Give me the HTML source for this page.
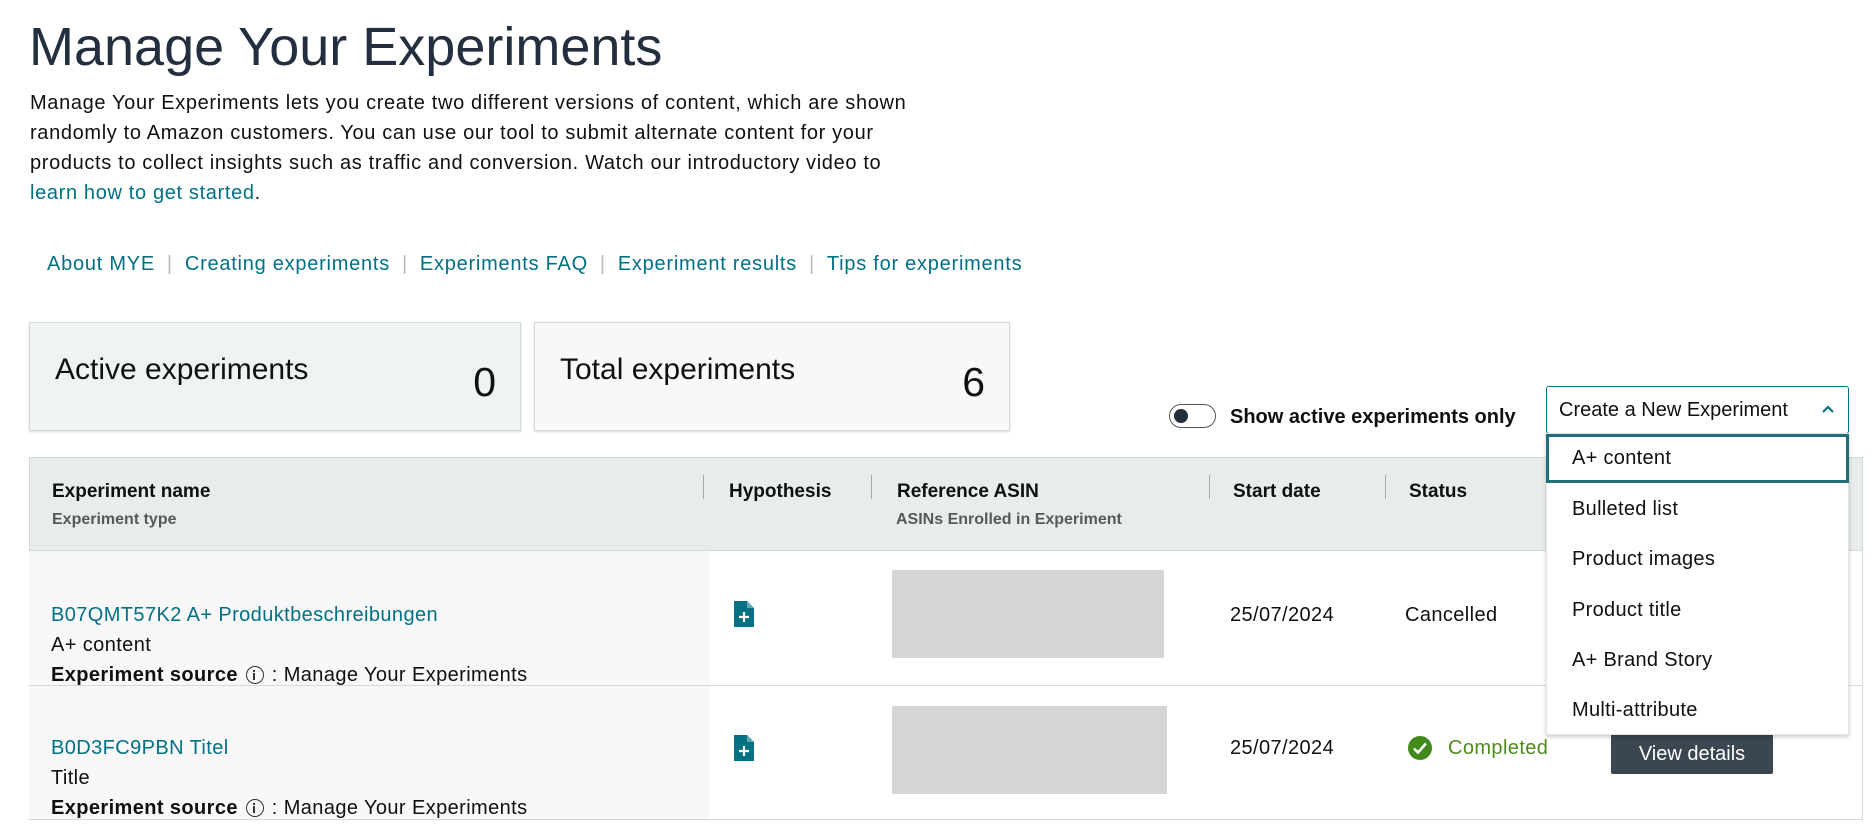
<!DOCTYPE html>
<html><head><meta charset="utf-8"><style>
*{margin:0;padding:0;box-sizing:border-box}
body{width:1876px;height:829px;overflow:hidden;background:#fff;font-family:"Liberation Sans",sans-serif;color:#0f1111;position:relative}
.a{position:absolute;white-space:nowrap}
.l{color:#007185}
h1{position:absolute;left:29px;top:16px;font-size:54px;font-weight:400;color:#232f3e;letter-spacing:0px}
.p{left:30px;font-size:20px;line-height:30px;top:88px;letter-spacing:0.65px}
.links{left:47px;top:253px;font-size:20px;letter-spacing:0.75px}
.links span.s{color:#bbb;margin:0 12px}
.card{position:absolute;top:322px;height:109px;border:1px solid #d5d9d9;box-shadow:0 1px 2px rgba(0,0,0,.15)}
.card .t{position:absolute;left:25px;top:30px;font-size:30px}
.card .n{position:absolute;right:24px;top:36px;font-size:41px}
.th{position:absolute;left:29px;top:457px;width:1834px;height:94px;background:#e9ecec;border:1px solid #d5d9d9}
.hd{font-weight:700;font-size:19px;top:481px}
.sub{font-size:16px;color:#565959;top:511px;font-weight:700}
.div{position:absolute;top:475px;width:1px;height:24px;background:#aaa}
.row{position:absolute;left:29px;width:1834px;border-bottom:1px solid #d5d9d9;border-right:1px solid #d5d9d9}
.c1{position:absolute;left:0;top:0;width:681px;height:100%;background:#f8f8f8}
.f{font-size:20px;letter-spacing:0.4px;line-height:24px}
.grey{position:absolute;background:#d5d5d7}
.menu{position:absolute;left:1546px;top:433px;width:303px;height:302px;background:#fff;box-shadow:0 2px 4px rgba(0,0,0,.2);border:1px solid #e3e3e3}
.mi{position:absolute;left:25px;font-size:20px;letter-spacing:0.3px}
.i{display:inline-block;width:18px;height:18px;border:1.5px solid #333;border-radius:50%;vertical-align:-3px;position:relative;margin:0 2px}
.i:after{content:"";position:absolute;left:6.5px;top:6px;width:2px;height:7px;background:#333}
.i:before{content:"";position:absolute;left:6.5px;top:2.5px;width:2px;height:2px;background:#333}
</style></head><body>
<h1>Manage Your Experiments</h1>
<div class="a p">Manage Your Experiments lets you create two different versions of content, which are shown<br>randomly to Amazon customers. You can use our tool to submit alternate content for your<br>products to collect insights such as traffic and conversion. Watch our introductory video to<br><span class="l">learn how to get started</span>.</div>
<div class="a links"><span class="l">About MYE</span><span class="s">|</span><span class="l">Creating experiments</span><span class="s">|</span><span class="l">Experiments FAQ</span><span class="s">|</span><span class="l">Experiment results</span><span class="s">|</span><span class="l">Tips for experiments</span></div>
<div class="card" style="left:29px;width:492px;background:#f0f4f0"><div class="t">Active experiments</div><div class="n">0</div></div>
<div class="card" style="left:534px;width:476px;background:#f8f8f8"><div class="t">Total experiments</div><div class="n">6</div></div>
<div class="a" style="left:1169px;top:404px;width:47px;height:24px;border:1.5px solid #555;border-radius:12px"><div style="position:absolute;left:4px;top:4px;width:14px;height:14px;border-radius:50%;background:#232f3e"></div></div>
<div class="a" style="left:1230px;top:406px;font-size:20px;font-weight:700">Show active experiments only</div>
<div class="a" style="left:1546px;top:386px;width:303px;height:48px;border:1px solid #007185;border-radius:3px;background:#fff"><span style="position:absolute;left:12px;top:12px;font-size:20px">Create a New Experiment</span><svg style="position:absolute;right:12px;top:16px" width="16" height="12" viewBox="0 0 16 12"><path d="M3 9 L8 4 L13 9" stroke="#007185" stroke-width="2.2" fill="none"/></svg></div>
<div class="th"></div>
<div class="a hd" style="left:52px">Experiment name</div><div class="a sub" style="left:52px">Experiment type</div>
<div class="div" style="left:703px"></div>
<div class="a hd" style="left:729px">Hypothesis</div>
<div class="div" style="left:871px"></div>
<div class="a hd" style="left:897px">Reference ASIN</div><div class="a sub" style="left:896px">ASINs Enrolled in Experiment</div>
<div class="div" style="left:1209px"></div>
<div class="a hd" style="left:1233px">Start date</div>
<div class="div" style="left:1385px"></div>
<div class="a hd" style="left:1409px">Status</div>
<div class="row" style="top:551px;height:135px"><div class="c1"></div></div>
<div class="row" style="top:686px;height:134px"><div class="c1"></div></div>
<div class="a f l" style="left:51px;top:603px">B07QMT57K2 A+ Produktbeschreibungen</div>
<div class="a f" style="left:51px;top:633px">A+ content</div>
<div class="a f" style="left:51px;top:663px"><b>Experiment source</b> <span class="i"></span> : Manage Your Experiments</div>
<div class="a f l" style="left:51px;top:736px">B0D3FC9PBN Titel</div>
<div class="a f" style="left:51px;top:766px">Title</div>
<div class="a f" style="left:51px;top:796px"><b>Experiment source</b> <span class="i"></span> : Manage Your Experiments</div>
<svg class="a" style="left:733px;top:600px" width="22" height="28" viewBox="0 0 22 28"><path d="M1 1h13l7 7v19H1z" fill="#007185"/><path d="M14 1v7h7" fill="#5fa8b4"/><path d="M11 12v10M6 17h10" stroke="#fff" stroke-width="2.2"/></svg>
<svg class="a" style="left:733px;top:734px" width="22" height="28" viewBox="0 0 22 28"><path d="M1 1h13l7 7v19H1z" fill="#007185"/><path d="M14 1v7h7" fill="#5fa8b4"/><path d="M11 12v10M6 17h10" stroke="#fff" stroke-width="2.2"/></svg>
<div class="grey" style="left:892px;top:570px;width:272px;height:88px"></div>
<div class="grey" style="left:892px;top:706px;width:275px;height:88px"></div>
<div class="a f" style="left:1230px;top:603px">25/07/2024</div>
<div class="a f" style="left:1405px;top:603px">Cancelled</div>
<div class="a f" style="left:1230px;top:736px">25/07/2024</div>
<svg class="a" style="left:1407px;top:735px" width="26" height="26" viewBox="0 0 26 26"><circle cx="13" cy="13" r="12" fill="#3f8a1a"/><path d="M7 13.5l4 4 8-9" stroke="#fff" stroke-width="2.6" fill="none"/></svg>
<div class="a f" style="left:1448px;top:736px;color:#4e8a1c">Completed</div>
<div class="a" style="left:1611px;top:734px;width:162px;height:40px;background:#3b4651;border-radius:2px;color:#fff;font-size:20px;text-align:center;line-height:40px">View details</div>
<div class="menu">
<div style="position:absolute;left:-1px;top:0;width:303px;height:49px;border:3px solid #1f6f7a"></div>
<div class="mi" style="top:13px">A+ content</div>
<div class="mi" style="top:64px">Bulleted list</div>
<div class="mi" style="top:114px">Product images</div>
<div class="mi" style="top:165px">Product title</div>
<div class="mi" style="top:215px">A+ Brand Story</div>
<div class="mi" style="top:265px">Multi-attribute</div>
</div>
</body></html>
